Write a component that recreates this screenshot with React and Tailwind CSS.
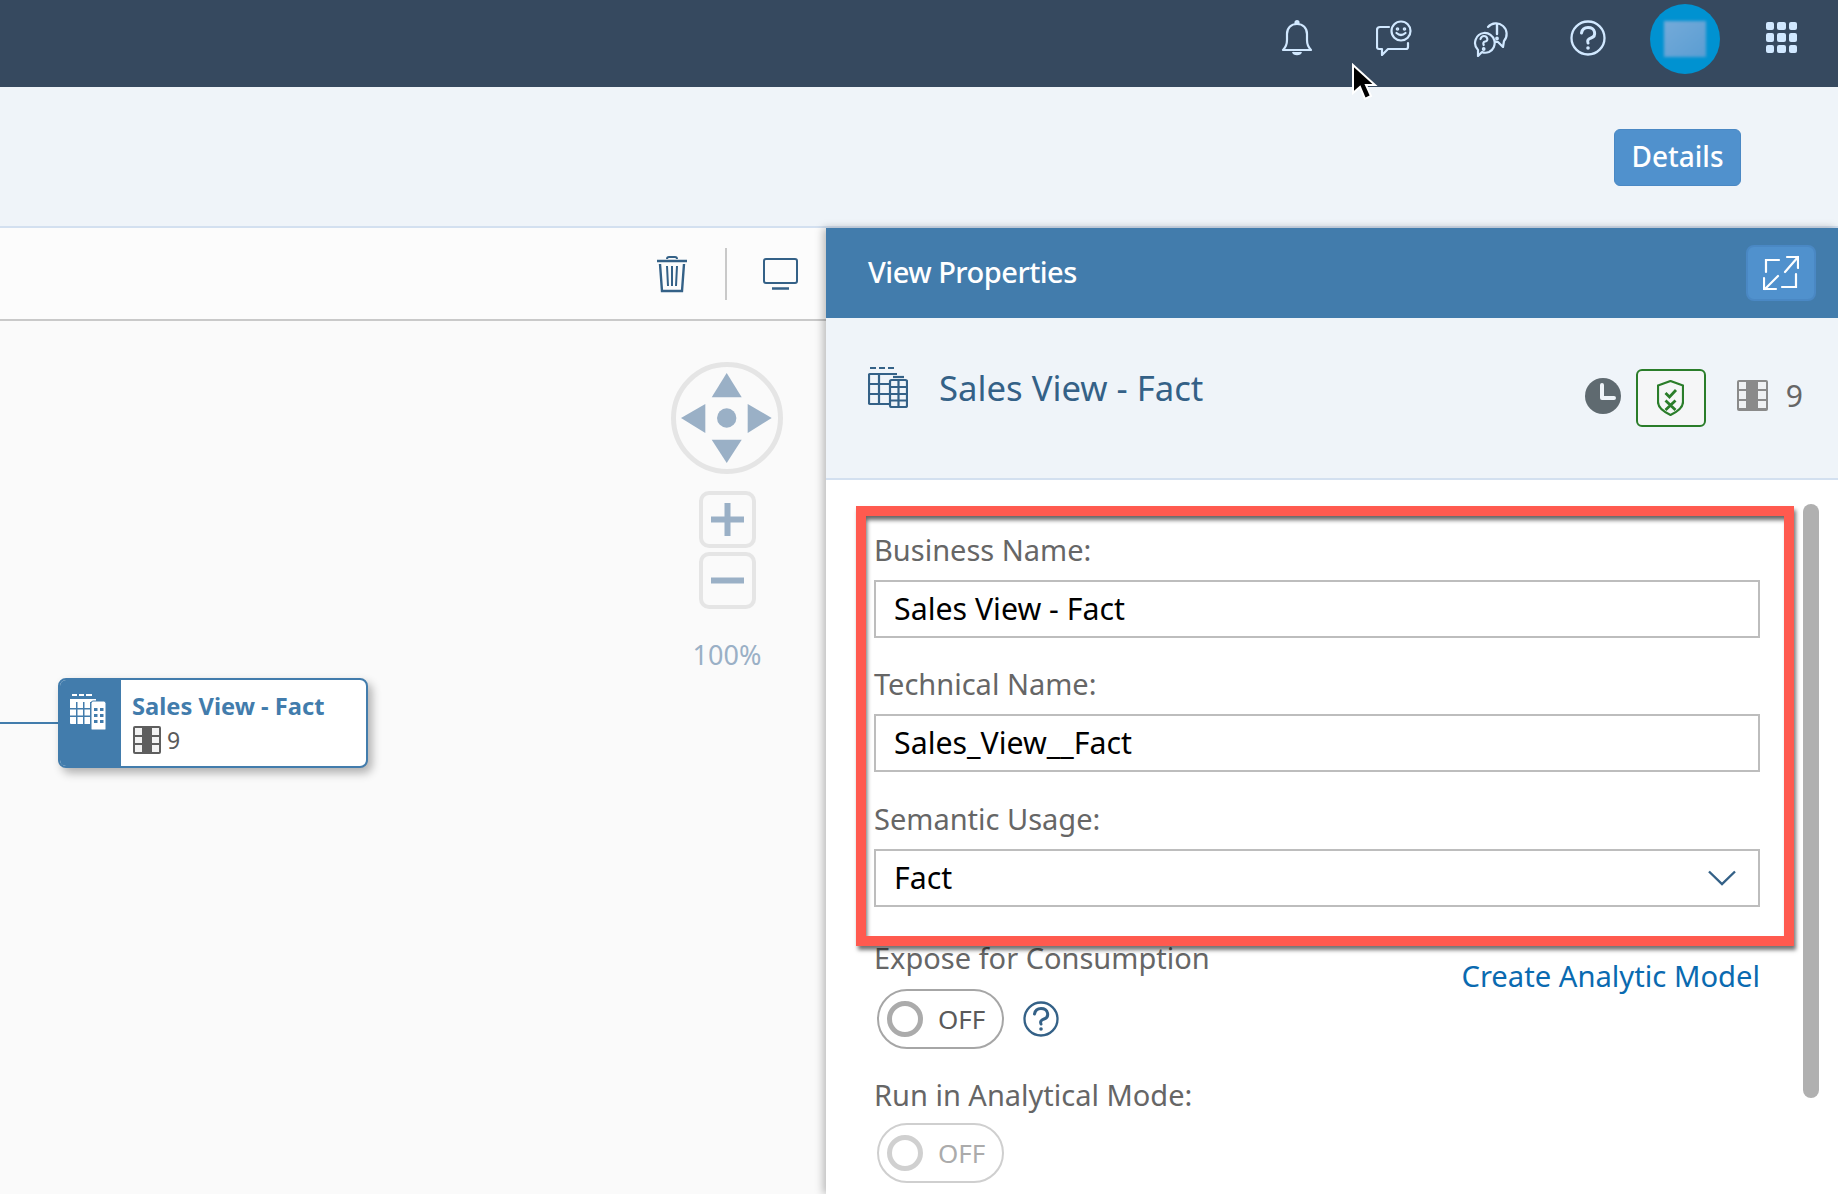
function Bell() {
  return (
    <svg width="32" height="38" viewBox="0 0 32 38" fill="none" stroke="#d1e8ff" strokeWidth="2.200" strokeLinejoin="round">
      <path d="M2 31c3-3 4-5 4-10v-6c0-6 4-10 10-10s10 4 10 10v6c0 5 1 7 4 10z" />
      <path d="M12 33c1 3 7 3 8 0" fill="#d1e8ff" />
      <circle cx="16" cy="3.500" r="1.500" fill="#d1e8ff" />
    </svg>
  );
}

function Feedback() {
  return (
    <svg width="36" height="36" viewBox="0 0 36 36" fill="none" stroke="#d1e8ff" strokeWidth="2.200" strokeLinecap="round" strokeLinejoin="round">
      <path d="M13 7H4Q1 7 1 10v17q0 2 2 2h3v6l6-6h18q2 0 2-2v-4" />
      <circle cx="25" cy="11" r="9.500" />
      <circle cx="21.500" cy="9" r="0.700" fill="#d1e8ff" />
      <circle cx="28.500" cy="9" r="0.700" fill="#d1e8ff" />
      <path d="M20.500 13q4.500 4 9 0" />
    </svg>
  );
}

function QuestionBubbles() {
  return (
    <svg width="36" height="38" viewBox="0 0 36 38" fill="none" stroke="#d1e8ff" strokeWidth="2.200" strokeLinecap="round" strokeLinejoin="round">
      <path d="M15 8a10 10 0 1 1 16 14l-1 6-5-5q-2 0-3-.5" />
      <path d="M24 5v10" strokeWidth="2.400" />
      <circle cx="24" cy="19.500" r="0.800" fill="#d1e8ff" />
      <path d="M11 14a10 10 0 0 1 5 19q-4 1.500-7 0L5 37v-6a10 10 0 0 1 6-17z" />
      <path d="M7.500 20q1-3 3.500-3t3.200 2.500-2 3-1.500 3.500" />
      <circle cx="10.700" cy="30" r="0.800" fill="#d1e8ff" />
    </svg>
  );
}

function Help({ size = 36, color = "#d1e8ff" }) {
  return (
    <svg width={size} height={size} viewBox="0 0 36 36" fill="none" stroke={color} strokeWidth="2.300" strokeLinecap="round">
      <circle cx="18" cy="18" r="16.500" />
      <path d="M11.500 13q1-5.500 6.500-5.500t6.500 4.500-3.500 6-3 5" strokeWidth="3" />
      <circle cx="18" cy="28" r="1.800" fill={color} stroke="none" />
    </svg>
  );
}

function AppGrid() {
  return (
    <div className="grid w-[31px] grid-cols-3 gap-[3px]">
      {[0, 1, 2, 3, 4, 5, 6, 7, 8].map((i) => (
        <div key={i} className="h-[8.500px] rounded-[2px] bg-[#d1e8ff]" />
      ))}
    </div>
  );
}

function Trash() {
  return (
    <svg width="30" height="38" viewBox="0 0 30 38" fill="none" stroke="#346187" strokeWidth="2">
      <path d="M0 6h30" strokeWidth="2.500" />
      <path d="M10 4q0-2 2-2h6q2 0 2 2" />
      <path d="M3 9l2 27h20l2-27" strokeWidth="2.400" />
      <path d="M10 11l1 20M15 11v20M20 11l-1 20" />
    </svg>
  );
}

function Monitor() {
  return (
    <svg width="35" height="32" viewBox="0 0 35 32" fill="none" stroke="#346187" strokeWidth="2">
      <rect x="1" y="1" width="33" height="24" rx="2" />
      <path d="M9 30.500h17" strokeWidth="2.500" />
    </svg>
  );
}

function TablesOutline() {
  return (
    <svg width="40" height="41" viewBox="0 0 40 41" fill="none" stroke="#346187" strokeWidth="2.200">
      <path d="M2 1h6M11 1h6M20 1h6" />
      <path d="M29 7H2q-1 0-1 1v28q0 1 1 1h19" />
      <path d="M1 17h21M1 27h21M11 7v30" />
      <rect x="22" y="13" width="17" height="27" rx="1.500" />
      <path d="M25 10h11" />
      <path d="M22 20h17M22 27h17M22 33.500h17M30.500 13v27" />
    </svg>
  );
}

function TablesFilled() {
  return (
    <svg width="36" height="36" viewBox="0 0 36 36" fill="#ffffff">
      <path d="M2 0h5v2H2zM9 0h5v2H9zM16 0h6v2h-6z" />
      <path d="M0 5h26v3H20v22H1q-1 0-1-1z" />
      <path d="M0 14h20v1.500H0zM0 21.500h20V23H0zM6 8h1.500v22H6zM13 8h1.500v22H13z" fill="#427cac" />
      <path d="M21 9.500q0-2.500 2-2.500h11q2 0 2 2.500V35q0 1-1 1H22q-1 0-1-1z" stroke="#427cac" strokeWidth="1" />
      <path d="M24 14h3.500v3H24zM30 14h3.500v3H30zM24 20h3.500v3H24zM30 20h3.500v3H30zM24 26h3.500v3H24zM30 26h3.500v3H30z" fill="#427cac" />
    </svg>
  );
}

function Columns({ size, color, hole }) {
  const cells = [0, 1, 2];
  return (
    <div className="flex justify-between rounded-[2px] p-[2px]" style={{ width: size, height: size, backgroundColor: color }}>
      {[0, 1].map((c) => (
        <div key={c} className="flex w-[28%] flex-col justify-between">
          {cells.map((r) => (
            <div key={r} className="h-[28%]" style={{ backgroundColor: hole }} />
          ))}
        </div>
      ))}
    </div>
  );
}

function Shield() {
  return (
    <svg width="27" height="36" viewBox="0 0 27 36" fill="none" stroke="#2a7d2a" strokeWidth="2.200">
      <path d="M13.500 1L26 5.500V22c0 6-6 10-12.500 13C7 32 1 28 1 22V5.500z" />
      <path d="M8.500 13l4 4 6.500-7" strokeWidth="2.800" />
      <path d="M8.500 20.500l10 9.500M18.500 20.500l-10 9.500" strokeWidth="2.800" />
    </svg>
  );
}

function Expand() {
  return (
    <svg width="36" height="36" viewBox="0 0 36 36" fill="none" stroke="#fff" strokeWidth="2.200" strokeLinecap="round">
      <path d="M3 17V5h13" />
      <path d="M33 19v13H19" />
      <path d="M22 17L35 2M24 2h11v11" />
      <path d="M15 21L2 34M13 34H1V23" />
    </svg>
  );
}

function NavPad() {
  return (
    <div className="size-[112px] rounded-full border-[5px] border-[#e5e5e5]">
      <svg width="102" height="102" viewBox="5 4 102 102" fill="#9ab0c6">
        <polygon points="55.700,10 40.700,34.300 70.700,34.300" />
        <polygon points="10,55 34.300,41 34.300,70" />
        <polygon points="100.700,55 76.700,41 76.700,70" />
        <polygon points="55.700,100 40.700,76.700 70.700,76.700" />
        <circle cx="55.700" cy="55" r="9.700" />
      </svg>
    </div>
  );
}

function ZoomButton({ plus }) {
  return (
    <div className="flex h-[57px] w-[57px] items-center justify-center rounded-[10px] border-[4px] border-[#e5e5e5]">
      <svg width="33" height="33" viewBox="0 0 33 33" fill="#9ab0c6">
        <rect y="13.500" width="33" height="6" />
        {plus && <rect x="13.500" width="6" height="33" />}
      </svg>
    </div>
  );
}

function Toggle({ disabled }) {
  return (
    <div className={`flex h-[60px] w-[127px] items-center rounded-full border-2 pl-[8px] ${disabled ? "border-[#cfcfcf]" : "border-[#a6a6a6]"}`}>
      <div className={`size-[36px] rounded-full border-[5px] ${disabled ? "border-[#d0d0d0]" : "border-[#ababab]"}`} />
      <span className={`ml-[15px] text-[26px] ${disabled ? "text-[#ababab]" : "text-[#5a5a5a]"}`}>OFF</span>
    </div>
  );
}

function Field({ label, value, className, select }) {
  return (
    <div className={className}>
      <div className="flex h-[36px] items-center text-[29px] text-[#666666]">{label}</div>
      <div className="mt-[12px] flex h-[58px] items-center justify-between border-2 border-[#bdbdbd] pb-[1px] pl-[18px] pr-[22px] text-[30.300px] text-black">
        {value}
        {select && (
          <svg width="28" height="16" viewBox="0 0 28 16" fill="none" stroke="#346187" strokeWidth="2.400">
            <path d="M1 1.500l13 12.500 13-12.500" />
          </svg>
        )}
      </div>
    </div>
  );
}

export default function App() {
  return (
    <div className="relative flex h-[1194px] w-[1838px] flex-col overflow-hidden bg-white font-['Noto_Sans',sans-serif]">
      {/* Shell bar */}
      <header className="flex h-[87px] shrink-0 items-center justify-end bg-[#36495f] pb-[12px] pr-[8px]">
        {[<Bell key="b" />, <Feedback key="f" />, <QuestionBubbles key="q" />, <Help key="h" />].map((icon, i) => (
          <div key={i} className="flex w-[97px] justify-center">{icon}</div>
        ))}
        <div className="flex w-[97px] justify-center pt-[3px]">
          <div className="flex size-[70px] items-center justify-center rounded-full bg-[#0092d1]">
            <div className="h-[36px] w-[42px] bg-linear-to-br from-[#74aad9] to-[#5a9dd2] blur-[1.500px]" />
          </div>
        </div>
        <div className="flex w-[97px] justify-center"><AppGrid /></div>
      </header>

      {/* Sub header */}
      <div className="flex h-[141px] shrink-0 items-center justify-end border-b-2 border-[#d3e0f0] bg-[#eff4f9] pr-[97px] pt-[2px]">
        <button className="flex h-[57px] w-[127px] items-center justify-center rounded-[6px] border border-[#4a88c4] bg-[#5091cd] pb-[3px] text-[28px] font-medium text-white">
          Details
        </button>
      </div>

      <div className="flex min-h-0 flex-1">
        {/* Canvas */}
        <div className="flex w-[826px] shrink-0 flex-col">
          <div className="flex h-[93px] shrink-0 items-center justify-end border-b-2 border-[#c9c9c9] bg-[#fcfcfc] pr-[28px]">
            <Trash />
            <div className="ml-[38px] mr-[36px] h-[52px] w-[2px] bg-[#c9c9c9]" />
            <Monitor />
          </div>
          <div className="relative flex-1 bg-[#fafafa]">
            <div className="absolute left-[671px] top-[41px] flex w-[112px] flex-col items-center">
              <NavPad />
              <div className="mt-[17px] flex flex-col gap-[4px]">
                <ZoomButton plus />
                <ZoomButton />
              </div>
              <div className="mt-[26px] text-[27px] text-[#9ab0c6]">100%</div>
            </div>
            <div className="absolute left-0 top-[401px] h-[2px] w-[58px] bg-[#427cac]" />
            <div className="absolute left-[58px] top-[357px] flex h-[90px] w-[310px] overflow-hidden rounded-[8px] border-2 border-[#427cac] bg-white shadow-[4px_5px_10px_rgba(0,0,0,0.3)]">
              <div className="flex w-[61px] shrink-0 justify-center bg-[#427cac] pr-[5px] pt-[14px]">
                <TablesFilled />
              </div>
              <div className="pl-[11px] pt-[10px]">
                <div className="text-[23.700px] font-bold leading-[32px] text-[#427cac]">Sales View - Fact</div>
                <div className="ml-[1px] mt-[3px] flex items-center gap-[6px] text-[23px] leading-[30px] text-[#5a5a5a]">
                  <Columns size={28} color="#5e5e5e" hole="#f2f2f2" />
                  9
                </div>
              </div>
            </div>
          </div>
        </div>

        {/* Properties panel */}
        <aside className="relative z-10 flex min-w-0 flex-1 flex-col bg-white shadow-[-3px_0_8px_rgba(0,0,0,0.25)]">
          <div className="flex h-[90px] shrink-0 items-center justify-between bg-[#427cac] pl-[42px] pr-[22px]">
            <h2 className="-mt-[2px] text-[29px] font-medium tracking-[-0.500px] text-white">View Properties</h2>
            <div className="flex h-[56px] w-[70px] items-center justify-center rounded-[8px] border-2 border-[#4a88c4] bg-[#5091cd]">
              <Expand />
            </div>
          </div>
          <div className="flex h-[162px] shrink-0 items-center border-b-2 border-[#d3e0f0] bg-[#eff4f9] pl-[42px] pr-[35px]">
            <div className="-mt-[20px] flex flex-1 items-center gap-[31px]">
              <TablesOutline />
              <span className="text-[34.700px] text-[#346187]">Sales View - Fact</span>
            </div>
            <svg className="-mt-[4px]" width="36" height="36" viewBox="0 0 36 36">
              <circle cx="18" cy="18" r="18" fill="#5f6a70" />
              <path d="M17 7v13h12" fill="none" stroke="#eff4f9" strokeWidth="4" strokeLinecap="round" strokeLinejoin="round" />
            </svg>
            <div className="ml-[15px] flex h-[58px] w-[70px] items-center justify-center rounded-[6px] border-2 border-[#2a7d2a] bg-[#f5f6f7]">
              <Shield />
            </div>
            <div className="-mt-[6px] ml-[31px]"><Columns size={31} color="#8a8a8a" hole="#eff1f3" /></div>
            <span className="-mt-[6px] ml-[18px] text-[30px] text-[#666666]">9</span>
          </div>

          <div className="flex min-h-0 flex-1">
            <form className="w-[934px] shrink-0 pl-[48px] pt-[52px]">
              <Field label="Business Name:" value="Sales View - Fact" />
              <Field label="Technical Name:" value="Sales_View__Fact" className="mt-[28px]" />
              <Field label="Semantic Usage:" value="Fact" className="mt-[29px]" select />
              <div className="mt-[33px] flex justify-between">
                <div>
                  <div className="flex h-[36px] items-center text-[29px] text-[#666666]">Expose for Consumption</div>
                  <div className="ml-[3px] mt-[13px] flex items-center gap-[19px]">
                    <Toggle />
                    <Help size={36} color="#346187" />
                  </div>
                </div>
                <a className="mt-[18px] text-[29.200px] leading-[36px] text-[#0a6ab0]">Create Analytic Model</a>
              </div>
              <div className="mt-[28px] flex h-[36px] items-center text-[29px] text-[#666666]">Run in Analytical Mode:</div>
              <div className="ml-[3px] mt-[10px]"><Toggle disabled /></div>
            </form>
            <div className="ml-[43px] mt-[24px] h-[594px] w-[16px] rounded-full bg-[#b0b0b0]" />
          </div>

          {/* Annotation */}
          <div className="absolute left-[30px] top-[278px] h-[440px] w-[938px] border-[10px] border-[#ff5a4f] shadow-[2px_4px_4px_rgba(0,0,0,0.55),inset_2px_5px_4px_-1px_rgba(0,0,0,0.6)]" />
        </aside>
      </div>

      {/* Mouse pointer */}
      <svg className="absolute left-[1351px] top-[63px] z-20" width="27" height="39" viewBox="0 0 27 39">
        <path d="M2 2v28l7-6 5 12 6-3-5-11h9z" fill="#000" stroke="#fff" strokeWidth="2" />
      </svg>
    </div>
  );
}
